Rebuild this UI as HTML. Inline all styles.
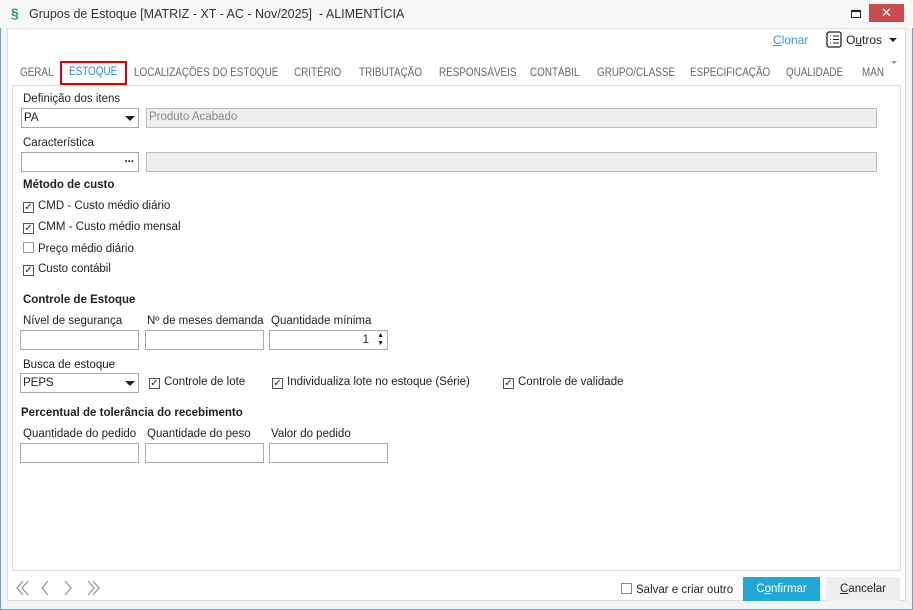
<!DOCTYPE html>
<html><head><meta charset="utf-8"><style>
*{box-sizing:border-box;margin:0;padding:0}
body{width:913px;height:610px;background:#f0f0f0;font-family:"Liberation Sans",sans-serif;font-size:11.5px;color:#222;position:relative;overflow:hidden}
.a{position:absolute;white-space:nowrap}
.in{position:absolute;height:20px;border:1px solid #aaa;background:#fff}
.dis{background:#efefef;border-color:#bbb;color:#888}
.cb{display:inline-block;width:11px;height:11px;border:1px solid #555;background:#fff;vertical-align:-1px;margin-right:4px;position:relative;font-size:10px;line-height:9px;text-align:center}
.tab{position:absolute;top:67px;color:#666;font-size:11.5px;transform:scaleX(0.86);transform-origin:0 0;white-space:nowrap}
</style></head><body>
<div class="a" style="left:0;top:0;width:913px;height:610px;border:1px solid #6fa0d0;border-top:none;background:#f3f3f3"></div>
<div class="a" style="left:0;top:0;width:913px;height:28px;background:#f7f7f7"></div>
<div class="a" style="left:11px;top:5px;color:#2a9d6a;font-size:14px;font-weight:bold">§</div>
<div class="a" style="left:29px;top:7px;font-size:12.5px;color:#333">Grupos de Estoque [MATRIZ - XT - AC - Nov/2025]&nbsp; - ALIMENTÍCIA</div>
<div class="a" style="left:851px;top:10px;width:10px;height:8px;border:1px solid #222;border-top-width:2px"></div>
<div class="a" style="left:869px;top:4px;width:35px;height:18px;background:#c94c4c;color:#fff;text-align:center;font-size:13px;line-height:18px">✕</div>
<div class="a" style="left:7px;top:28px;width:899px;height:573px;background:#fff;border:1px solid #ddd"></div>
<div class="a" style="left:773px;top:33px;color:#3a9ad9;font-size:12px"><u>C</u>lonar</div>
<svg class="a" style="left:826px;top:31px" width="17" height="17"><rect x="1" y="1" width="14" height="15" rx="2" fill="none" stroke="#222" stroke-width="1.3"/><g stroke="#222"><line x1="4" y1="5" x2="5" y2="5"/><line x1="7" y1="5" x2="13" y2="5"/><line x1="4" y1="8.5" x2="5" y2="8.5"/><line x1="7" y1="8.5" x2="13" y2="8.5"/><line x1="4" y1="12" x2="5" y2="12"/><line x1="7" y1="12" x2="13" y2="12"/></g></svg>
<div class="a" style="left:846px;top:33px;font-size:12px;color:#222">O<u>u</u>tros</div>
<div class="a" style="left:889px;top:38px;border:4px solid transparent;border-top:4px solid #222;border-bottom:none"></div>
<div class="tab" style="left:20px">GERAL</div>
<div class="a" style="left:60px;top:61px;width:67px;height:24px;border:2px solid #e00000;background:#fff"></div>
<div class="tab" style="left:69px;top:66px;color:#2b8ad0">ESTOQUE</div>
<div class="tab" style="left:134px">LOCALIZAÇÕES DO ESTOQUE</div>
<div class="tab" style="left:294px">CRITÉRIO</div>
<div class="tab" style="left:359px">TRIBUTAÇÃO</div>
<div class="tab" style="left:439px">RESPONSÁVEIS</div>
<div class="tab" style="left:530px">CONTÁBIL</div>
<div class="tab" style="left:597px">GRUPO/CLASSE</div>
<div class="tab" style="left:690px">ESPECIFICAÇÃO</div>
<div class="tab" style="left:786px">QUALIDADE</div>
<div class="tab" style="left:862px">MAN</div>
<div class="a" style="left:891px;top:61px;border:3px solid transparent;border-top:3px solid #999;border-bottom:none"></div>
<div class="a" style="left:12px;top:85px;width:889px;height:486px;border:1px solid #ddd;background:#fff"></div>
<div class="a" style="left:23px;top:93px">Definição dos itens</div>
<div class="in" style="left:21px;top:108px;width:118px"><span class="a" style="left:2px;top:3px">PA</span><span class="a" style="right:3px;top:7px;border:5px solid transparent;border-top:5px solid #222;border-bottom:none"></span></div>
<div class="in dis" style="left:146px;top:108px;width:731px"><span class="a" style="left:2px;top:2px">Produto Acabado</span></div>
<div class="a" style="left:23px;top:137px">Característica</div>
<div class="in" style="left:21px;top:152px;width:118px"><span class="a" style="right:4px;top:0px;font-weight:bold">...</span></div>
<div class="in dis" style="left:146px;top:152px;width:731px"></div>
<div class="a" style="left:23px;top:179px;font-weight:bold">Método de custo</div>
<div class="a" style="left:23px;top:200px"><span class="cb">✓</span>CMD - Custo médio diário</div>
<div class="a" style="left:23px;top:221px"><span class="cb">✓</span>CMM - Custo médio mensal</div>
<div class="a" style="left:23px;top:242px"><span class="cb" style="border-color:#999"></span>Preço médio diário</div>
<div class="a" style="left:23px;top:263px"><span class="cb">✓</span>Custo contábil</div>
<div class="a" style="left:23px;top:294px;font-weight:bold">Controle de Estoque</div>
<div class="a" style="left:23px;top:315px">Nível de segurança</div>
<div class="a" style="left:147px;top:315px">Nº de meses demanda</div>
<div class="a" style="left:271px;top:315px">Quantidade mínima</div>
<div class="in" style="left:20px;top:330px;width:119px"></div>
<div class="in" style="left:145px;top:330px;width:119px"></div>
<div class="in" style="left:269px;top:330px;width:119px"><span class="a" style="right:18px;top:3px">1</span><span class="a" style="right:3px;top:1px;font-size:7px;line-height:8px">▲<br>▼</span></div>
<div class="a" style="left:23px;top:359px">Busca de estoque</div>
<div class="in" style="left:20px;top:373px;width:119px"><span class="a" style="left:2px;top:3px">PEPS</span><span class="a" style="right:3px;top:7px;border:5px solid transparent;border-top:5px solid #222;border-bottom:none"></span></div>
<div class="a" style="left:149px;top:376px"><span class="cb">✓</span>Controle de lote</div>
<div class="a" style="left:272px;top:376px"><span class="cb">✓</span>Individualiza lote no estoque (Série)</div>
<div class="a" style="left:503px;top:376px"><span class="cb">✓</span>Controle de validade</div>
<div class="a" style="left:21px;top:407px;font-weight:bold">Percentual de tolerância do recebimento</div>
<div class="a" style="left:23px;top:428px">Quantidade do pedido</div>
<div class="a" style="left:147px;top:428px">Quantidade do peso</div>
<div class="a" style="left:271px;top:428px">Valor do pedido</div>
<div class="in" style="left:20px;top:443px;width:119px"></div>
<div class="in" style="left:145px;top:443px;width:119px"></div>
<div class="in" style="left:269px;top:443px;width:119px"></div>
<svg class="a" style="left:12px;top:579px" width="95" height="18" fill="none" stroke="#999" stroke-width="1.3"><path d="M11 2 L5 9 L11 16 M16 2 L10 9 L16 16"/><path d="M36 2 L30 9 L36 16"/><path d="M53 2 L59 9 L53 16"/><path d="M76 2 L82 9 L76 16 M81 2 L87 9 L81 16"/></svg>
<div class="a" style="left:621px;top:583px"><span class="cb" style="border-color:#888"></span>Salvar e criar outro</div>
<div class="a" style="left:743px;top:577px;width:77px;height:24px;background:#22a8d6;color:#fff;text-align:center;line-height:24px">C<u>o</u>nfirmar</div>
<div class="a" style="left:826px;top:577px;width:74px;height:24px;background:#eee;color:#222;text-align:center;line-height:24px"><u>C</u>ancelar</div>
</body></html>
